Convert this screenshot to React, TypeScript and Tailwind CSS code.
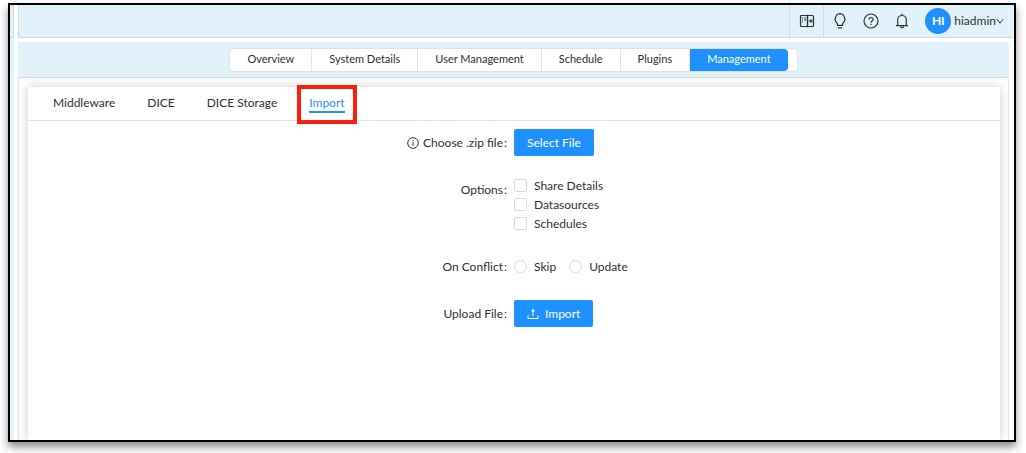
import { useState } from 'react';
import type { ReactNode } from 'react';

const sections = ['Overview', 'System Details', 'User Management', 'Schedule', 'Plugins', 'Management'];
const tabs = ['Middleware', 'DICE', 'DICE Storage', 'Import'];
const importOptions = ['Share Details', 'Datasources', 'Schedules'];
const conflictActions = ['Skip', 'Update'];

function PanelIcon() {
  return (
    <svg width="16" height="16" viewBox="0 0 16 16" fill="none" stroke="currentColor" strokeWidth="1.2">
      <rect x="1.500" y="2.500" width="13" height="11" rx="1" />
      <path d="M8.500 1.800v12.400" strokeWidth="1.400" />
      <path d="M3 5h1M5 5h2M3 7h1M5 7h2M3 9h1" strokeWidth="1" />
      <path d="M14 8h-2" />
      <path d="M12.500 5.800v4.400L9.800 8z" fill="currentColor" stroke="none" />
    </svg>
  );
}

function BulbIcon() {
  return (
    <svg width="16" height="16" viewBox="0 0 16 16" fill="none" stroke="currentColor" strokeWidth="1.2">
      <path d="M5.400 12.300v-1.900A5.400 5.400 0 0 1 8 .7a5.400 5.400 0 0 1 2.600 9.700v1.900z" strokeLinejoin="round" />
      <path d="M5.800 14.900h4.400" />
    </svg>
  );
}

function HelpIcon() {
  return (
    <svg width="16" height="16" viewBox="0 0 16 16" fill="none" stroke="currentColor" strokeWidth="1.2">
      <circle cx="8" cy="8" r="7" />
      <path d="M5.900 6.500a2.100 2 0 1 1 3 1.800c-.6.3-.9.700-.9 1.500" />
      <path d="M8 10.800v1.300" />
    </svg>
  );
}

function BellIcon() {
  return (
    <svg width="16" height="16" viewBox="0 0 16 16" fill="none" stroke="currentColor" strokeWidth="1.2">
      <path d="M3.700 12.500V6.800a4.300 4.300 0 0 1 8.600 0v5.700M2 12.600h12M8 .8v1.700" />
      <path d="M6.500 13.200a1.500 1.500 0 0 0 3 0" />
    </svg>
  );
}

function InfoIcon() {
  return (
    <svg width="12" height="12" viewBox="0 0 12 12" fill="none" stroke="currentColor">
      <circle cx="6" cy="6" r="5.300" />
      <path d="M6 5.200v3.600M6 3v1.200" />
    </svg>
  );
}

function UploadIcon() {
  return (
    <svg width="12" height="12" viewBox="0 0 12 12" fill="none" stroke="currentColor">
      <path d="M1 7.500v3h10v-3M6 8V2" />
      <path d="M6 .8l2 2.600H4z" fill="currentColor" stroke="none" />
    </svg>
  );
}

function FormRow({ label, icon, children }: { label: string; icon?: ReactNode; children: ReactNode }) {
  return (
    <div className="grid grid-cols-2 items-start">
      <div className="h-[27px] flex items-center justify-end pr-[7px]">
        {icon}
        <span className="ml-1">{label}</span>
        <span className="ml-px">:</span>
      </div>
      <div className="min-h-[27px] flex items-center">{children}</div>
    </div>
  );
}

export default function App() {
  const [section, setSection] = useState('Management');
  const [tab, setTab] = useState('Import');
  const [options, setOptions] = useState<string[]>([]);
  const [conflict, setConflict] = useState('');

  const toggleOption = (name: string) => {
    setOptions(prev => (prev.includes(name) ? prev.filter(o => o !== name) : [...prev, name]));
  };

  return (
    <div className="min-h-screen flex bg-white pt-[3px] pr-[10px] pb-[11px] pl-2 font-['Lato',sans-serif] text-xs text-[#2f2f2f]">
      <div className="flex-1 flex border-2 border-black shadow-[0_5px_8px_rgba(0,0,0,0.45)] overflow-hidden">
        {/* Collapsed side bar */}
        <aside className="w-1 shrink-0 flex flex-col">
          <div className="h-[33px] bg-[#e1f2fb] border-r border-b border-[#d3d9dc]" />
          <div className="flex-1 bg-[#e1f2fb] border-r border-[#eff6fa]" />
        </aside>

        <div className="flex-1 flex flex-col ml-1">
          {/* Header */}
          <header className="h-[33px] shrink-0 flex items-center justify-end bg-[#e1f2fb] border-l border-b border-[#d3d9dc]">
            <button aria-label="Toggle panel" className="w-[35px] h-full flex items-center justify-center border-x border-[#d3d9dc]">
              <PanelIcon />
            </button>
            <div className="flex items-center gap-[15px] pl-2">
              <button aria-label="Tips"><BulbIcon /></button>
              <button aria-label="Help"><HelpIcon /></button>
              <button aria-label="Notifications"><BellIcon /></button>
            </div>
            <button className="flex items-center ml-[15px] mr-[10px]">
              <span className="size-[26px] mr-[3px] rounded-full bg-[#1e90ff] text-white font-bold flex items-center justify-center">
                HI
              </span>
              hiadmin
              <svg width="8" height="8" viewBox="0 0 8 8" fill="none" stroke="currentColor">
                <path d="M1 2.200l3 4 3-4" />
              </svg>
            </button>
          </header>

          <main className="flex-1 flex flex-col mt-1 mr-[5px]">
            {/* Sections */}
            <nav className="h-9 shrink-0 flex items-center justify-center bg-[#e1f2fb] border-b border-[#d3d9dc] text-[11px]">
              <div className="h-6 flex bg-white border border-[#dfe3e5] rounded-sm pr-[9px]">
                {sections.map(s => (
                  <button
                    key={s}
                    onClick={() => setSection(s)}
                    className={
                      section === s
                        ? 'px-[17px] bg-[#1e90ff] text-white rounded-r-sm'
                        : 'px-[17px] border-r border-[#dfe3e5]'
                    }
                  >
                    {s}
                  </button>
                ))}
              </div>
            </nav>

            <div className="flex-1 flex flex-col border-x border-[#e6e6e6] bg-[#fcfcfc] pl-[9px] pr-2 pt-[9px]">
              <div className="flex-1 bg-white shadow-[0_0_8px_rgba(0,0,0,0.18)]">
                {/* Tabs */}
                <nav className="h-[34px] flex items-center gap-8 px-[25px] border-b border-[#e4e4e4]">
                  {tabs.map(t => (
                    <button key={t} onClick={() => setTab(t)} className="relative pt-px">
                      <span className={tab === t ? 'block border-b-2 border-[#1e90ff] text-[#1e90ff]' : 'block border-b-2 border-transparent'}>
                        {t}
                      </span>
                      {t === 'Import' && <span className="absolute -inset-x-3 -top-[9px] -bottom-[11px] border-4 border-[#fb1d0e]" />}
                    </button>
                  ))}
                </nav>

                {/* Import form */}
                <form className="flex flex-col gap-5 pt-2" onSubmit={e => e.preventDefault()}>
                  <FormRow label="Choose .zip file" icon={<InfoIcon />}>
                    <button type="button" className="h-[27px] px-[13px] rounded-xs bg-[#1e90ff] text-white">
                      Select File
                    </button>
                  </FormRow>

                  <FormRow label="Options">
                    <div>
                      {importOptions.map(o => (
                        <label key={o} className="h-[19px] flex items-center gap-[7px]">
                          <input
                            type="checkbox"
                            checked={options.includes(o)}
                            onChange={() => toggleOption(o)}
                            className="appearance-none size-[13px] border border-[#d9d9d9] rounded-xs bg-white checked:bg-[#1e90ff]"
                          />
                          {o}
                        </label>
                      ))}
                    </div>
                  </FormRow>

                  <FormRow label="On Conflict">
                    <div className="flex gap-[13px]">
                      {conflictActions.map(c => (
                        <label key={c} className="flex items-center gap-[7px]">
                          <input
                            type="radio"
                            name="conflict"
                            checked={conflict === c}
                            onChange={() => setConflict(c)}
                            className="appearance-none size-[13px] border border-[#d9d9d9] rounded-full bg-white checked:bg-[#1e90ff]"
                          />
                          {c}
                        </label>
                      ))}
                    </div>
                  </FormRow>

                  <FormRow label="Upload File">
                    <button type="submit" className="h-[27px] px-[13px] flex items-center gap-[6px] rounded-xs bg-[#1e90ff] text-white">
                      <UploadIcon /> Import
                    </button>
                  </FormRow>
                </form>
              </div>
            </div>
          </main>
        </div>
      </div>
    </div>
  );
}
